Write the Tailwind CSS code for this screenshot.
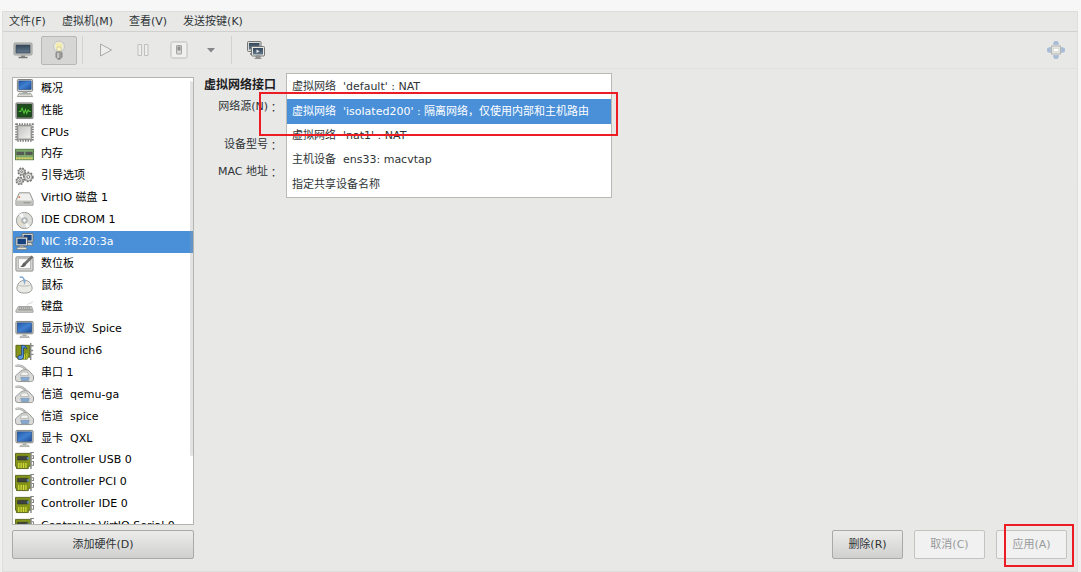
<!DOCTYPE html>
<html lang="zh-CN">
<head>
<meta charset="utf-8">
<meta name="viewport" content="width=device-width, initial-scale=1">
<title>虚拟机</title>
<script src="https://cdn.jsdelivr.net/npm/@tailwindcss/browser@4"></script>
</head>
<body class="bg-[#f3f3f3] font-['DejaVu_Sans','Noto_Sans_CJK_SC',sans-serif] text-[11px] leading-4 text-[#2e3436]">
<svg class="absolute size-0" aria-hidden="true">
  <defs>
    <linearGradient id="gBlue" x1="0" y1="0" x2="1" y2="1"><stop offset="0" stop-color="#245aa8"/><stop offset=".5" stop-color="#3f80d0"/><stop offset="1" stop-color="#1c4c98"/></linearGradient>
    <linearGradient id="gGrey" x1="0" y1="0" x2="1" y2="1"><stop offset="0" stop-color="#c4c4c2"/><stop offset="1" stop-color="#f0f0ee"/></linearGradient>
    <linearGradient id="gSlate" x1="0" y1="0" x2="0" y2="1"><stop offset="0" stop-color="#34485c"/><stop offset="1" stop-color="#64798c"/></linearGradient>
  </defs>
  <symbol id="computer" viewBox="0 0 20 20"><rect x="2.500" y=".5" width="16" height="12.500" rx="1" fill="#e4e4e0" stroke="#777975"/><rect x="4" y="2" width="13" height="9" fill="url(#gBlue)" stroke="#173e7c" stroke-width=".6"/><path d="M8 13h5v2H8z" fill="#aaa"/><path d="M4.500 15h12l2 3.500h-16z" fill="#e6e6e2" stroke="#83857f" stroke-width=".8"/><path d="M5 16.600h11" stroke="#9a9c96" stroke-width=".7"/></symbol>
  <symbol id="perf" viewBox="0 0 20 20"><rect x="1" y="2" width="18" height="16.500" rx=".8" fill="#a9aaa8" stroke="#777976"/><rect x="2.500" y="3.500" width="15" height="13.500" fill="#1d4f1c" stroke="#0b2b0c" stroke-width=".6"/><path d="M4 11h2l1.500-3.500L9.500 13l1.500-4 1.300 4 1.500-3.500L15 11h1.500" fill="none" stroke="#56c93c" stroke-width="1.100"/></symbol>
  <symbol id="cpu" viewBox="0 0 20 20"><rect x="1.500" y="1.500" width="17" height="17" fill="none" stroke="#7b7d79" stroke-width="2.500" stroke-dasharray="1.500 1.200"/><rect x="2.500" y="2.500" width="15" height="15" rx="1" fill="#b9bab7" stroke="#8a8b88"/><rect x="4" y="4" width="12" height="12" fill="url(#gGrey)"/></symbol>
  <symbol id="memory" viewBox="0 0 20 20"><rect x=".5" y="4.500" width="19" height="11" fill="#7ba76b" stroke="#557f48"/><path d="M1.500 7h8v3.500h-8zM11 7h7.500v3.500H11z" fill="#555a54"/><path d="M1 14h18" stroke="#e0d268" stroke-width="2.200" stroke-dasharray="1.200 .4"/></symbol>
  <symbol id="gears" viewBox="0 0 20 20"><g fill="#dededb" stroke="#777975"><circle cx="7" cy="5" r="3.800" stroke-width="1.500" stroke-dasharray="1.800 1.200"/><circle cx="7" cy="5" r="3" stroke-width=".8"/><circle cx="5" cy="14.500" r="3.800" stroke-width="1.500" stroke-dasharray="1.800 1.200"/><circle cx="5" cy="14.500" r="3" stroke-width=".8"/><circle cx="14" cy="10.500" r="4.800" stroke-width="1.700" stroke-dasharray="2 1.500"/><circle cx="14" cy="10.500" r="4" stroke-width=".8"/></g><g fill="#fff" stroke="#777"><circle cx="7" cy="5" r="1"/><circle cx="5" cy="14.500" r="1"/><circle cx="14" cy="10.500" r="1.500"/></g></symbol>
  <symbol id="disk" viewBox="0 0 20 20"><path d="M4.500 4h11L19 12v5H1v-5z" fill="#dededb" stroke="#92948f" stroke-linejoin="round"/><path d="M5 5h10l2.500 6.500h-15z" fill="#efefed"/><path d="M1.500 12.500h17V16h-17z" fill="#bfc0bc"/><circle cx="4.500" cy="8.500" r="1" fill="#e46b3a"/><path d="M9 14.500h7" stroke="#8c8e89"/></symbol>
  <symbol id="cd" viewBox="0 0 20 20"><circle cx="10" cy="10" r="8.500" fill="#dededb" stroke="#92948f"/><path d="M10 10 4 4l4-2zM10 10l6 6-4 2z" fill="#f8f8f8"/><path d="m10 10-6 3 1.500 2.500z" fill="#e9dfbe"/><circle cx="10" cy="10" r="3" fill="#c4c9ce" stroke="#989a96" stroke-width=".8"/><circle cx="10" cy="10" r="1.200" fill="#fff"/></symbol>
  <symbol id="nic" viewBox="0 0 20 20"><path d="M10 11h7l2 3h-9z" fill="#d8d8d3" stroke="#6f716c" stroke-width=".7"/><rect x="7.500" y="1.500" width="11.500" height="9" rx=".8" fill="#e6e6e2" stroke="#5d605c" stroke-width=".9"/><rect x="9" y="3" width="8.500" height="6" fill="#17417f"/><rect x="1" y="5.500" width="12" height="9" rx=".8" fill="#f0f0ec" stroke="#5d605c" stroke-width=".9"/><rect x="2.500" y="7" width="9" height="6" fill="#17417f"/><path d="M5 14.500h4v1.500H5z" fill="#aaa"/><path d="M3 16h8.500l1.500 2.500H1.500z" fill="#e8e6d8" stroke="#6f716c" stroke-width=".7"/></symbol>
  <symbol id="tablet" viewBox="0 0 20 20"><rect x="1" y="3" width="18" height="15" rx="1" fill="#d4d4d1" stroke="#8b8d88"/><rect x="3.500" y="5" width="13" height="10.500" fill="#fafafa" stroke="#a2a4a0" stroke-width=".7"/><path d="M17.500 2 10 9l1.700 1.700L18.800 3.500z" fill="#727471" stroke="#4f514e" stroke-width=".6"/><path d="M10 9c-2.500.500-2 3.500-4.500 4.500 3 1 6-.5 6.200-2.800z" fill="#5e605e"/></symbol>
  <symbol id="mouse" viewBox="0 0 20 20"><path d="M5 1.500c2-1 4.500 0 4.500 3" fill="none" stroke="#7da3d2" stroke-width="1.500"/><path d="M10 4.500c5 0 8 4.500 8 8.500 0 3-3 5-8 5s-8-2-8-5c0-4 3-8.500 8-8.500z" fill="#e9e9e6" stroke="#969893"/><path d="M3.500 9.500c2 1.500 11 1.500 13 0M10 5v4" fill="none" stroke="#b5b7b2"/><rect x="9" y="3.500" width="2" height="4" rx="1" fill="#83acd9"/></symbol>
  <symbol id="keyboard" viewBox="0 0 20 20"><path d="M13 8c0-4 6-1 5-4.500" fill="none" stroke="#d3d5cf"/><path d="M3.500 9h14l1.500 4.500v1.500H1v-1.500z" fill="#d0d0cd" stroke="#8c8e89" stroke-width=".8"/><path d="M4 10.500h12.500M3.500 12.500h14" stroke="#7b7d79" stroke-width="1.200" stroke-dasharray="1.500 .6"/></symbol>
  <symbol id="display" viewBox="0 0 20 20"><rect x="1" y="1.500" width="18" height="13" rx="1" fill="#d8d9d5" stroke="#7b7d78"/><rect x="2.500" y="3" width="15" height="10" fill="url(#gBlue)" stroke="#173e7c" stroke-width=".6"/><path d="M8 15h4v2H8z" fill="#b1b3ae"/><path d="M6 17h8l1 1.500H5z" fill="#e3e3df" stroke="#8d8f8a" stroke-width=".7"/></symbol>
  <symbol id="card" viewBox="0 0 20 20"><path d="M.500 2.500h16V16H14v2.500H1.500V16h-1z" fill="#84931a" stroke="#59651a"/><rect x="2.500" y="5.500" width="11" height="4" rx=".5" fill="#3f433f" stroke="#262a26" stroke-width=".5"/><path d="M12.500 6.500h2.500v2.500h-2.500z" fill="#5d88a7"/><path d="M4 12.500v5.500M6.500 12.500v5.500M9 12.500v5.500M11.500 12.500v5.500" stroke="#d3dd3b" stroke-width="1.300"/><path d="M16.800 1v18" stroke="#8b8e89" stroke-width="1.600"/><path d="M16.500 1.500h3.500M17.500 5h2v3h-2M17.500 11h2v4h-2" fill="none" stroke="#858883" stroke-width="1.100"/></symbol>
  <symbol id="sound" viewBox="0 0 20 20"><path d="M1 3.500h14.500V16H13v2H3v-2H1z" fill="#84931a" stroke="#59651a"/><path d="M10 13v5M12.500 12v6" stroke="#d3dd3b"/><path d="M16.500 1v18M17 4h2.500M17 9h2M17 13h2.500" fill="none" stroke="#858883" stroke-width="1.500"/><path d="M7 3.500c3 0 5 1 5.500 4-1.500-1.500-2.500-1.500-3.500-1.500v9c0 4-6 4.500-6 1.500 0-2 2-3 4-2.500z" fill="#5d9ae2" stroke="#173e7c" stroke-width=".8"/></symbol>
  <symbol id="serial" viewBox="0 0 20 20"><path d="M.500 2c5-1 9 1 12 5" fill="none" stroke="#9da09c" stroke-width="2.200"/><path d="M.500 2c5-1 9 1 12 5" fill="none" stroke="#dcdedb" stroke-width="1"/><path d="M6 7.500c2.500-2 7-2 9 0l4.500 5v3.500c0 2-2 2.500-3 2.500H3.500c-2 0-3-1-3-3v-3z" fill="#dadbd8" stroke="#8f928e"/><path d="M7 8.500 5.500 12h9L13 8.500z" fill="#f5f5f4" stroke="#a3a6a1" stroke-width=".7"/><path d="M6 14h9l-1 3.500H7z" fill="#86a9d2" stroke="#7892ae" stroke-width=".7"/></symbol>
</svg>

<div class="flex min-h-screen flex-col bg-linear-to-b from-[#f7f7f7] to-[#f0f0f0] pt-[11px] pr-[3px] pb-px pl-[2px]">
 <div class="flex flex-1 flex-col border border-[#dededc] bg-[#e8e8e7]">
  <nav class="flex h-5 items-center gap-4 border-b border-[#d0d0ce] pl-[6px]" aria-label="菜单">
    <button>文件(F)</button><button>虚拟机(M)</button><button>查看(V)</button><button>发送按键(K)</button>
  </nav>

  <div class="flex h-9 items-center pl-2" role="toolbar" aria-label="工具栏">
    <button aria-label="控制台" class="flex w-6 justify-center"><svg class="size-5" viewBox="0 0 20 20"><rect x="1" y="3" width="18" height="12" rx="1" fill="#c7c9c6" stroke="#9a9c98"/><rect x="3" y="5" width="14" height="8" fill="url(#gSlate)" stroke="#3a4857" stroke-width=".8"/><path d="M8 15.500h4V17H8z" fill="#8c8e89"/><path d="M5.500 17.500h9" stroke="#777a76" stroke-width="1.500"/></svg></button>
    <button aria-label="详情" aria-pressed="true" class="ml-[6px] flex h-[29px] w-9 items-center justify-center rounded-xs border border-[#b7b7b4] bg-[#d6d6d4]"><svg class="size-5" viewBox="0 0 20 20"><circle cx="10" cy="6.500" r="5.500" fill="#e9e9e4" stroke="#c2c2be"/><circle cx="10" cy="6" r="3.500" fill="#f4edae"/><path d="M8 8l1-1.500 1 1 1-1 1 1.500v3H8z" fill="#fff8c9" stroke="#b5b58c" stroke-width=".6"/><rect x="7" y="12" width="6" height="6" rx="1" fill="#b4b5b2" stroke="#747672" stroke-width=".8"/><path d="M7 14h6M7 16h6" stroke="#7d7f7b" stroke-width=".8"/><path d="M9 13v5" stroke="#eee"/><path d="M8.500 19h3" stroke="#666"/></svg></button>
    <span class="ml-[5px] h-7 w-px bg-[#d2d2cf]"></span>
    <button aria-label="运行" class="ml-[11px] flex w-6 justify-center" disabled><svg class="size-5" viewBox="0 0 20 20"><path d="M4.500 4 15.500 10l-11 6z" fill="#eeeeec" stroke="#a9aba7" stroke-linejoin="round"/></svg></button>
    <button aria-label="暂停" class="ml-[13px] flex w-6 justify-center" disabled><svg class="size-5" viewBox="0 0 20 20"><path d="M5 4.500h3.500v11H5zM11.500 4.500H15v11h-3.500z" fill="#eeeeec" stroke="#bfc0bd"/></svg></button>
    <button aria-label="关机" class="ml-3 flex w-6 justify-center" disabled><svg class="size-5" viewBox="0 0 20 20"><rect x="2" y="2" width="16" height="16" rx="1.500" fill="#f0f0ee" stroke="#bcbdb9"/><rect x="7.500" y="5.500" width="5" height="8.500" rx=".5" fill="#d9d9d7" stroke="#a0a29d"/><path d="M8.500 6.500h3v4h-3z" fill="#8d8f8b"/></svg></button>
    <button aria-label="关机选项" class="ml-2 flex w-6 justify-center"><svg class="size-5" viewBox="0 0 20 20"><path d="M6 8h8l-4 4.500z" fill="#84868a"/></svg></button>
    <span class="ml-2 h-7 w-px bg-[#d2d2cf]"></span>
    <button aria-label="快照" class="ml-3 flex w-6 justify-center"><svg class="size-5" viewBox="0 0 20 20"><rect x="1.500" y="1.500" width="13.500" height="10" rx="1" fill="#d8dad7" stroke="#747773"/><rect x="3" y="3" width="10.500" height="6.500" fill="url(#gSlate)"/><path d="M4 13h4v2H4z" fill="#90938e"/><rect x="5.500" y="6.500" width="13" height="9.500" rx="1" fill="#e5e7e4" stroke="#747773"/><rect x="7" y="8" width="10" height="6.500" fill="url(#gSlate)"/><path d="m10.500 9.500 3 1.700-3 1.800z" fill="#eee"/><path d="M10 16h4v2h-4zM8.500 18.500h7" fill="#aaa" stroke="#777" stroke-width=".7"/></svg></button>
    <button aria-label="全屏" class="mr-[9px] ml-auto flex w-6 justify-center"><svg class="size-5" viewBox="0 0 20 20"><g fill="#a9bdd9" stroke="#9db1ce" stroke-width=".6"><path d="M7.500 3.500 8.500 1.500h3l1 2v1h-5zM7.500 16.500l1 2h3l1-2v-1h-5zM3.500 7.500 1.500 8.500v3l2 1h1v-5zM16.500 7.500l2 1v3l-2 1h-1v-5z"/></g><rect x="5.500" y="6" width="9" height="8" fill="#e4e4e2" stroke="#b4b6b1"/><rect x="7.500" y="8.500" width="5" height="3" fill="#fff" stroke="#d0d2cd" stroke-width=".6"/></svg></button>
  </div>

  <main class="flex flex-1 gap-[10px] border-t border-[#e0e0de] pt-2 pr-[10px] pb-3 pl-[9px]">
    <aside class="flex w-[182px] shrink-0 flex-col gap-[5px]">
      <div class="relative h-[448px] overflow-hidden border border-[#b4b4b1] bg-white text-black">
        <ul class="grid h-[459px] auto-rows-fr [&_button]:flex [&_button]:h-full [&_button]:w-full [&_button]:items-center [&_button]:gap-[7px] [&_button]:pl-[2px] [&_button]:whitespace-nowrap [&_svg]:size-[19px] [&_svg]:shrink-0">
          <li><button><svg><use href="#computer"/></svg>概况</button></li>
          <li><button><svg><use href="#perf"/></svg>性能</button></li>
          <li><button><svg><use href="#cpu"/></svg>CPUs</button></li>
          <li><button><svg><use href="#memory"/></svg>内存</button></li>
          <li><button><svg><use href="#gears"/></svg>引导选项</button></li>
          <li><button><svg><use href="#disk"/></svg>VirtIO 磁盘 1</button></li>
          <li><button><svg><use href="#cd"/></svg>IDE CDROM 1</button></li>
          <li class="bg-[#4a90d9] text-white"><button aria-current="true"><svg><use href="#nic"/></svg>NIC :f8:20:3a</button></li>
          <li><button><svg><use href="#tablet"/></svg>数位板</button></li>
          <li><button><svg><use href="#mouse"/></svg>鼠标</button></li>
          <li><button><svg><use href="#keyboard"/></svg>键盘</button></li>
          <li><button><svg><use href="#display"/></svg>显示协议&nbsp; Spice</button></li>
          <li><button><svg><use href="#sound"/></svg>Sound ich6</button></li>
          <li><button><svg><use href="#serial"/></svg>串口 1</button></li>
          <li><button><svg><use href="#serial"/></svg>信道&nbsp; qemu-ga</button></li>
          <li><button><svg><use href="#serial"/></svg>信道&nbsp; spice</button></li>
          <li><button><svg><use href="#display"/></svg>显卡&nbsp; QXL</button></li>
          <li><button><svg><use href="#card"/></svg>Controller USB 0</button></li>
          <li><button><svg><use href="#card"/></svg>Controller PCI 0</button></li>
          <li><button><svg><use href="#card"/></svg>Controller IDE 0</button></li>
          <li><button><svg><use href="#card"/></svg>Controller VirtIO Serial 0</button></li>
        </ul>
        <div class="absolute top-[3px] right-0 h-[375px] w-[3px] rounded-full bg-[#a0a0a0]/30"></div>
      </div>
      <button class="h-[29px] rounded-xs border border-[#a9a9a6] bg-linear-to-b from-[#ececeb] to-[#d0d0ce]">添加硬件(D)</button>
    </aside>

    <section class="flex flex-1 flex-col justify-between">
      <div class="relative">
        <h2 class="text-[12px] leading-4 font-bold text-[#1c2022]">虚拟网络接口</h2>
        <div class="flex w-[75px] flex-col pt-[6px] whitespace-nowrap [&>div]:flex [&>div]:h-4 [&>div]:items-center [&>div]:justify-end">
          <div id="source">网络源(N)<span lang="zh-TW" class="font-['Noto_Sans_CJK_TC',sans-serif]">：</span></div>
          <div class="mt-[22px]">设备型号<span lang="zh-TW" class="font-['Noto_Sans_CJK_TC',sans-serif]">：</span></div>
          <div class="mt-[11px]">MAC 地址<span lang="zh-TW" class="font-['Noto_Sans_CJK_TC',sans-serif]">：</span></div>
        </div>
        <div role="listbox" aria-labelledby="source" class="absolute -top-1 left-[82px] grid h-[125px] w-[326px] auto-rows-fr border border-[#b9b9b6] bg-white pt-px [&_button]:px-[5px] [&_button]:text-left [&_button]:whitespace-nowrap">
          <button role="option">虚拟网络&nbsp; 'default' : NAT</button>
          <button role="option" aria-selected="true" class="bg-[#4a90d9] text-white">虚拟网络&nbsp; 'isolated200' : 隔离网络，仅使用内部和主机路由</button>
          <button role="option">虚拟网络&nbsp; 'nat1' : NAT</button>
          <button role="option">主机设备&nbsp; ens33: macvtap</button>
          <button role="option">指定共享设备名称</button>
        </div>
        <div class="pointer-events-none absolute top-[15px] left-[55px] h-11 w-[359px] border-2 border-[#ed1c24]"></div>
      </div>
      <div class="flex justify-end gap-[11px] [&_button]:h-[29px] [&_button]:w-[71px] [&_button]:rounded-xs [&_button]:border">
        <button class="border-[#a9a9a6] bg-linear-to-b from-[#ececeb] to-[#d0d0ce]">删除(R)</button>
        <button class="border-[#c3c3c1] bg-[#f1f1f1] text-[#989a9b]" disabled>取消(C)</button>
        <div class="relative">
          <button class="border-[#c3c3c1] bg-[#f1f1f1] text-[#989a9b]" disabled>应用(A)</button>
          <div class="pointer-events-none absolute -top-[6px] left-2 h-[43px] w-[70px] border-2 border-[#ed1c24]"></div>
        </div>
      </div>
    </section>
  </main>
 </div>
</div>
</body>
</html>
